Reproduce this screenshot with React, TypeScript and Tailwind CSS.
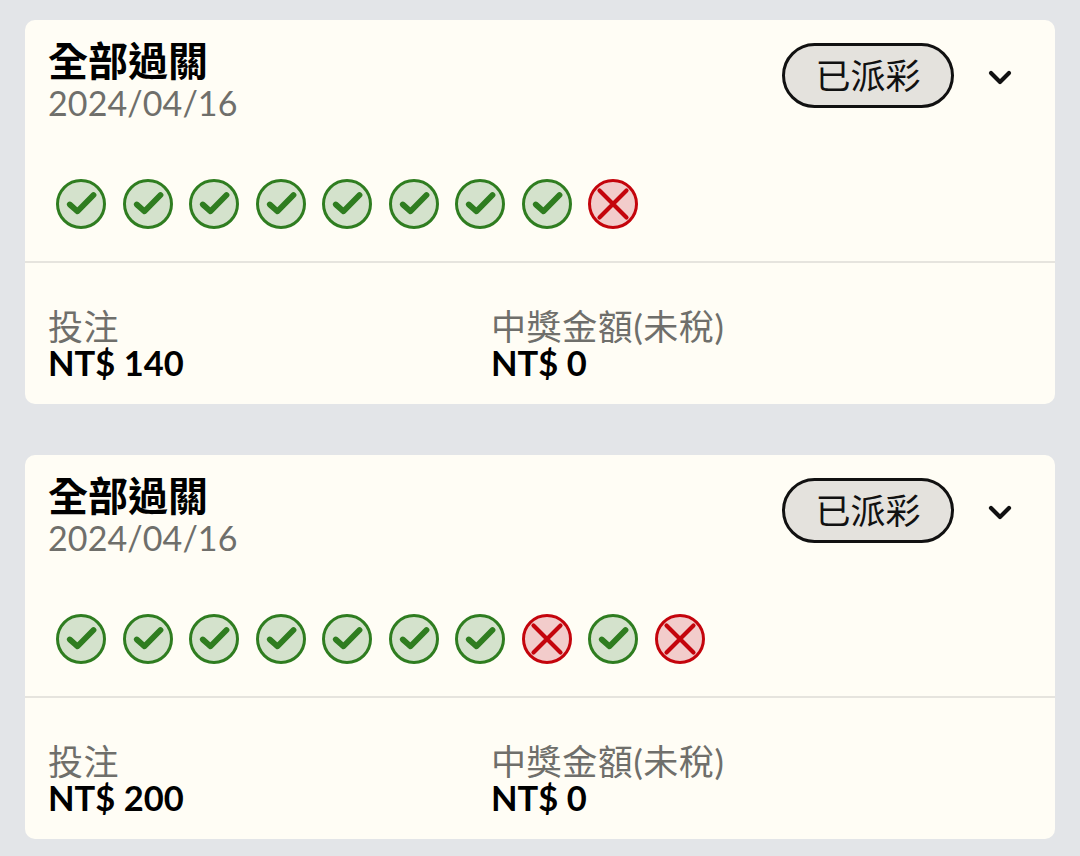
import React from "react";

const CheckIcon = () => (
  <svg width="50" height="50" viewBox="0 0 50 50" className="shrink-0">
    <circle cx="25" cy="25" r="23.5" fill="#d4e2cc" stroke="#2f7d20" strokeWidth="3" />
    <path d="M13.8 25.5l7.7 6.8L37.5 16" fill="none" stroke="#2f7d20" strokeWidth="5.8" strokeLinecap="round" strokeLinejoin="round" />
  </svg>
);

const CrossIcon = () => (
  <svg width="50" height="50" viewBox="0 0 50 50" className="shrink-0">
    <circle cx="25" cy="25" r="23.5" fill="#f2cccb" stroke="#c4040c" strokeWidth="3" />
    <path d="M11.5 11.5l27 27M38.5 11.5l-27 27" fill="none" stroke="#c4040c" strokeWidth="4.2" strokeLinecap="round" />
  </svg>
);

const Card = ({ stake, results }: { stake: string; results: boolean[] }) => (
  <div className="h-[384px] rounded-[10px] bg-[#fffdf5] flex flex-col">
    <div className="h-[241px] shrink-0 pl-[23px] pr-[43px] pt-[19px] flex flex-col">
      <div className="flex justify-between items-start">
        <div>
          <div className="text-[40px] leading-[44px] font-bold text-black">全部過關</div>
          <div className="text-[34px] leading-[39px] tracking-[0.1px] text-[#6f6f6b]">2024/04/16</div>
        </div>
        <div className="flex items-center mt-[4px]">
          <div className="w-[172px] h-[65px] rounded-full border-[3px] border-[#111] bg-[#e4e2dd] flex items-center justify-center text-[35px] text-[#111]">
            已派彩
          </div>
          <svg width="24" height="16" viewBox="0 0 24 16" className="ml-[34px] mt-[5px]">
            <path d="M3 3l9 9 9-9" fill="none" stroke="#111" strokeWidth="4.2" strokeLinecap="round" strokeLinejoin="round" />
          </svg>
        </div>
      </div>
      <div className="flex gap-[16.5px] ml-[8px] mt-[57px]">
        {results.map((ok, i) => (ok ? <CheckIcon key={i} /> : <CrossIcon key={i} />))}
      </div>
    </div>
    <div className="h-[2px] bg-[#e6e4de]" />
    <div className="flex pl-[23px] pt-[43px]">
      <div className="w-[443px]">
        <div className="text-[35px] leading-[40px] tracking-[0.6px] text-[#6f6f6b]">投注</div>
        <div className="text-[34.5px] leading-[34px] font-bold text-black">{stake}</div>
      </div>
      <div>
        <div className="text-[35px] leading-[40px] tracking-[0.6px] text-[#6f6f6b]">中獎金額(未稅)</div>
        <div className="text-[34.5px] leading-[34px] font-bold text-black">NT$ 0</div>
      </div>
    </div>
  </div>
);

export default function App() {
  return (
    <div
      className="w-[1080px] h-[856px] overflow-hidden bg-[#e3e5e8] px-[25px] pt-[20px] flex flex-col gap-[51px]"
      style={{ fontFamily: 'Lato, "Noto Sans CJK TC", sans-serif' }}
    >
      <Card stake="NT$ 140" results={[true, true, true, true, true, true, true, true, false]} />
      <Card stake="NT$ 200" results={[true, true, true, true, true, true, true, false, true, false]} />
    </div>
  );
}
